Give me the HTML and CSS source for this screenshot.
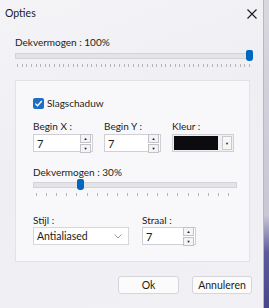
FILE: index.html
```html
<!DOCTYPE html>
<html lang="nl">
<head>
    <meta charset="UTF-8">
    <meta name="viewport" content="width=device-width, initial-scale=1.0">
    <title>Opties</title>
    <link rel="stylesheet" href="styles.css">
</head>
<body>
    <div class="window">
        <!-- Title bar -->
        <div class="titlebar">
            <span class="title">Opties</span>
            <svg class="close" width="10" height="10" viewBox="0 0 10 10">
                <path d="M0.5 0.5 L9.5 9.5 M9.5 0.5 L0.5 9.5" stroke="#1b1b1b" stroke-width="1.1" fill="none"/>
            </svg>
        </div>

        <div class="content">
            <div class="label">Dekvermogen : 100%</div>
            <div class="slider slider-main">
                <div class="track"></div>
                <div class="thumb" style="left: 231px"></div>
                <div class="ticks"></div>
            </div>

            <!-- Shadow settings -->
            <div class="group">
                <div class="check-row">
                    <span class="checkbox">
                        <svg width="9" height="9" viewBox="0 0 9 9">
                            <path d="M1.3 4.6 L3.5 6.8 L7.8 2" stroke="#fff" stroke-width="1.3" fill="none"/>
                        </svg>
                    </span>
                    <span>Slagschaduw</span>
                </div>

                <div class="field-row">
                    <div class="field">
                        <div class="label">Begin X :</div>
                        <div class="spinbox spin-x">
                            <span class="value">7</span>
                            <span class="arrows">
                                <span class="arrow-btn">&#9650;</span>
                                <span class="arrow-btn">&#9660;</span>
                            </span>
                        </div>
                    </div>
                    <div class="field">
                        <div class="label">Begin Y :</div>
                        <div class="spinbox spin-y">
                            <span class="value">7</span>
                            <span class="arrows">
                                <span class="arrow-btn">&#9650;</span>
                                <span class="arrow-btn">&#9660;</span>
                            </span>
                        </div>
                    </div>
                    <div class="field">
                        <div class="label">Kleur :</div>
                        <div class="color-box">
                            <span class="swatch"></span>
                            <span class="drop-btn">&#9660;</span>
                        </div>
                    </div>
                </div>

                <div class="label label-opacity">Dekvermogen : 30%</div>
                <div class="slider slider-small">
                    <div class="track"></div>
                    <div class="thumb" style="left: 44px"></div>
                    <div class="ticks"></div>
                </div>

                <div class="field-row style-row">
                    <div class="field">
                        <div class="label">Stijl :</div>
                        <div class="combo">
                            <span class="value">Antialiased</span>
                            <svg class="chevron" width="8" height="5" viewBox="0 0 8 5">
                                <path d="M0.5 0.5 L4 4 L7.5 0.5" stroke="#9a9a9a" stroke-width="1" fill="none"/>
                            </svg>
                        </div>
                    </div>
                    <div class="field">
                        <div class="label">Straal :</div>
                        <div class="spinbox spin-radius">
                            <span class="value">7</span>
                            <span class="arrows">
                                <span class="arrow-btn">&#9650;</span>
                                <span class="arrow-btn">&#9660;</span>
                            </span>
                        </div>
                    </div>
                </div>
            </div>

            <div class="buttons">
                <button class="btn btn-ok">Ok</button>
                <button class="btn">Annuleren</button>
            </div>
        </div>
    </div>
</body>
</html>
```

FILE: styles.css
```css
/* Dialog styles */
body {
    margin: 0;
    width: 269px;
    height: 308px;
    overflow: hidden;
    font-family: 'Lato', 'Noto Sans', sans-serif;
    font-size: 10px;
    color: #1b1b1b;
    background: linear-gradient(to bottom, #d9d7df 0%, #c9c6d6 70%, #5d5c9c 82%, #45478a 100%);
}

.window {
    width: 264px;
    height: 308px;
    background: linear-gradient(160deg, #f4f3f6 0%, #efeef3 45%, #f1f0f5 100%);
    border-right: 1px solid #b9b7c2;
    box-sizing: border-box;
}

.titlebar {
    height: 26px;
    display: flex;
    align-items: center;
    justify-content: space-between;
    padding: 0 6px 0 5px;
}

.title {
    font-size: 10.5px;
    line-height: 16px;
}

.close {
    margin-top: 1px;
}

.content {
    padding: 9px 0 0 15px;
}

.label {
    line-height: 15px;
    white-space: nowrap;
}

/* Sliders */
.slider {
    position: relative;
    height: 18px;
}

.slider-main {
    width: 238px;
}

.slider-small {
    width: 206px;
}

.track {
    position: absolute;
    left: 0;
    top: 3px;
    height: 4px;
    background: #e4e4e8;
    border: 1px solid #d3d3d8;
}

.slider-main .track {
    width: 230px;
}

.slider-small .track {
    width: 202px;
}

.thumb {
    position: absolute;
    top: 0;
    width: 7px;
    height: 11px;
    background: #0067c0;
    border-radius: 2px 2px 3px 3px;
}

.ticks {
    position: absolute;
    left: 2px;
    top: 14px;
    height: 3px;
    background: repeating-linear-gradient(to right, #b4b4ba 0, #b4b4ba 1px, transparent 1px, transparent 4.64px);
}

.slider-main .ticks {
    width: 234px;
}

.slider-small .ticks {
    left: 3px;
    width: 202px;
    background: repeating-linear-gradient(to right, #b4b4ba 0, #b4b4ba 1px, transparent 1px, transparent 10.1px);
}

/* Group panel */
.group {
    width: 235px;
    height: 182px;
    margin-top: 12px;
    padding: 14px 0 0 17px;
    box-sizing: border-box;
    background: #f8f8fa;
    border: 1px solid #e2e2e7;
}

.check-row {
    display: flex;
    align-items: center;
    gap: 3px;
    height: 16px;
}

.checkbox {
    width: 11px;
    height: 11px;
    border-radius: 2px;
    background: #1e6fc4;
    display: flex;
    align-items: center;
    justify-content: center;
}

.field-row {
    display: flex;
    gap: 11px;
    margin-top: 8px;
}

.spinbox,
.combo,
.color-box {
    height: 18px;
    box-sizing: border-box;
    display: flex;
    align-items: center;
    border: 1px solid #cfcfd4;
    background: #fff;
}

.spinbox .value,
.combo .value {
    flex: 1;
    padding-left: 3px;
    font-size: 10.5px;
}

.spinbox .value {
    font-size: 11px;
}

.spin-x {
    width: 60px;
}

.spin-y {
    width: 57px;
}

.spin-radius {
    width: 54px;
}

.arrows {
    display: flex;
    flex-direction: column;
    gap: 1px;
    margin-right: 1px;
}

.arrow-btn {
    width: 9px;
    height: 7px;
    border: 1px solid #c2c2c8;
    background: #f4f4f6;
    font-size: 4px;
    line-height: 7px;
    text-align: center;
    color: #111;
}

.color-box {
    width: 62px;
    padding: 1px;
    background: #f0f0f3;
}

.swatch {
    width: 45px;
    height: 14px;
    background: #0b0b10;
}

.drop-btn {
    width: 10px;
    height: 14px;
    margin-left: 4px;
    border: 1px solid #cacace;
    background: #f6f6f8;
    font-size: 4px;
    line-height: 14px;
    text-align: center;
    box-sizing: border-box;
}

.label-opacity {
    margin-top: 13px;
    line-height: 14px;
}

.style-row {
    gap: 13px;
    margin-top: 16px;
}

.style-row .label {
    line-height: 14px;
}

.combo {
    width: 96px;
    border-color: #d6d6db;
}

.chevron {
    margin-right: 6px;
}

/* Buttons */
.buttons {
    display: flex;
    justify-content: flex-end;
    gap: 13px;
    width: 237px;
    margin-top: 14px;
}

.btn {
    height: 18px;
    width: 60px;
    padding: 0;
    font-family: inherit;
    font-size: 10.5px;
    color: #1b1b1b;
    background: #fbfbfc;
    border: 1px solid #d5d5da;
    border-radius: 3px;
}

.btn-ok {
    width: 61px;
}
```
